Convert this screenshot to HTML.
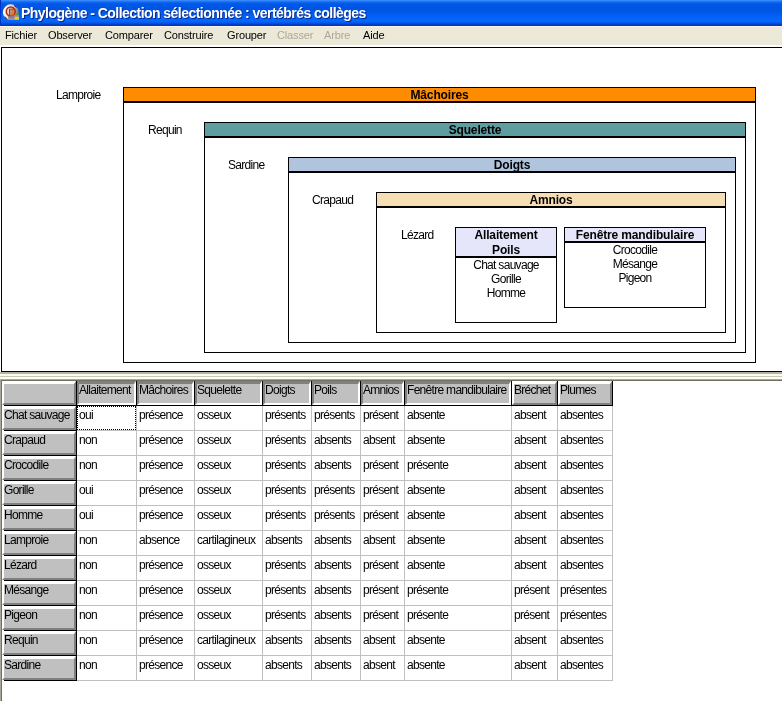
<!DOCTYPE html>
<html lang="fr"><head><meta charset="utf-8"><title>Phylogène</title>
<style>
html,body{margin:0;padding:0;}
body{width:782px;height:701px;overflow:hidden;background:#fff;position:relative;
 font-family:"Liberation Sans",Arial,sans-serif;font-size:12px;letter-spacing:-0.7px;color:#000;}
.a{position:absolute;}
.t{position:absolute;white-space:nowrap;line-height:13px;height:13px;z-index:5;}
#title{left:0;top:0;width:782px;height:26px;box-sizing:border-box;border-left:1px solid #0034c4;
 background:linear-gradient(to bottom,#3f93ff 0px,#1468f0 2px,#0058e6 4px,#0054e3 10px,#0260f4 16px,#0468ff 21px,#0456e8 23px,#0038b8 25px,#0038b8 26px);}
#title .txt{position:absolute;left:20px;top:5px;color:#fff;font-weight:bold;font-size:14px;letter-spacing:-0.54px;line-height:17px;white-space:nowrap;
 text-shadow:1px 1px 0 #0a2a8a;}
#menu{left:0;top:26px;width:782px;height:19px;background:#ece9d8;border-top:1px solid #fbf3ee;box-sizing:border-box;}
#menu span{position:absolute;top:2px;line-height:13px;white-space:nowrap;font-size:11px;letter-spacing:-0.15px;}
#menu span.d{color:#aca899;}
#up{left:1px;top:47px;width:790px;height:323px;border:1px solid #000;background:#fff;}
.box{position:absolute;border:1px solid #000;background:#fff;box-sizing:border-box;}
.band{position:absolute;left:0;right:0;top:0;border-bottom:2px solid #000;text-align:center;font-weight:bold;letter-spacing:-0.15px;line-height:13px;white-space:nowrap;}
.lst{position:absolute;left:0;right:0;text-align:center;line-height:14px;white-space:nowrap;}
.fh{position:absolute;background:#c0c0c0;box-sizing:border-box;border-style:solid;border-width:3px 2px 2px 2px;height:24px;}
.rh{border-color:#fff #808080 #808080 #fff;}
.ch{border-color:#808080 #fff #fff #808080;}
.vl{position:absolute;width:1px;}
.hl{position:absolute;height:1px;}
#root{position:absolute;left:0;top:0;width:782px;height:701px;overflow:hidden;will-change:transform;}
</style></head><body><div id="root">

<div id="title" class="a">
<svg class="a" style="left:1.5px;top:3.5px" width="16.5" height="16.5" viewBox="0 0 16 16"><defs><linearGradient id="ig" x1="0" y1="0.2" x2="1" y2="0.5"><stop offset="0" stop-color="#ffffff"/><stop offset="0.4" stop-color="#ece8e4"/><stop offset="0.75" stop-color="#b0a8a0"/><stop offset="1" stop-color="#787068"/></linearGradient></defs><circle cx="7.6" cy="8" r="7.7" fill="url(#ig)"/><path d="M10.8 1.2 L13.2 3.4 M1.6 12.2 L4 14.4" stroke="#282420" stroke-width="0.9" fill="none"/><rect x="5" y="10.5" width="10.4" height="5" fill="#a09088"/><circle cx="7.5" cy="7.3" r="4.3" fill="#e4d4c4" stroke="#b02c14" stroke-width="1.5"/><rect x="5.9" y="4.6" width="1.3" height="6" fill="#a02810"/><rect x="8.2" y="5.4" width="1.2" height="4.8" fill="#c85010"/><rect x="10.2" y="5" width="1.5" height="5.6" fill="#b03c20"/><rect x="7.2" y="4.4" width="4" height="1.1" fill="#a83018"/><rect x="7.4" y="9.6" width="3" height="1.6" fill="#e07010"/><rect x="11.6" y="9.2" width="3.2" height="1.8" fill="#48a840"/><rect x="6" y="11.8" width="5" height="1.6" fill="#8878b0"/><rect x="11.4" y="12.4" width="4" height="2.8" fill="#e4d020"/></svg>
<div class="txt">Phylogène - Collection sélectionnée : vertébrés collèges</div></div>
<div id="menu" class="a">
<span style="left:5px">Fichier</span>
<span style="left:48px">Observer</span>
<span style="left:105px">Comparer</span>
<span style="left:164px">Construire</span>
<span style="left:227px">Grouper</span>
<span style="left:277px" class="d">Classer</span>
<span style="left:324px" class="d">Arbre</span>
<span style="left:363px">Aide</span>
</div>
<div id="up" class="a"></div>
<div class="t" style="left:56px;top:89px">Lamproie</div>
<div class="t" style="left:148px;top:124px">Requin</div>
<div class="t" style="left:228px;top:159px">Sardine</div>
<div class="t" style="left:312px;top:194px">Crapaud</div>
<div class="t" style="left:401px;top:229px">Lézard</div>
<div class="box" style="left:123px;top:87px;width:633px;height:276px">
<div class="band" style="background:#ff8c00;height:13px;line-height:13px"><div style="margin-top:1px">Mâchoires</div></div>
</div>
<div class="box" style="left:204px;top:122px;width:542px;height:231px">
<div class="band" style="background:#5f9ea0;height:13px;line-height:13px"><div style="margin-top:1px">Squelette</div></div>
</div>
<div class="box" style="left:288px;top:157px;width:448px;height:186px">
<div class="band" style="background:#b0c4de;height:13px;line-height:13px"><div style="margin-top:1px">Doigts</div></div>
</div>
<div class="box" style="left:376px;top:192px;width:350px;height:141px">
<div class="band" style="background:#f5deb3;height:13px;line-height:13px"><div style="margin-top:1px">Amnios</div></div>
</div>
<div class="box" style="left:455px;top:227px;width:102px;height:96px">
<div class="band" style="background:#e6e6fa;height:28px;line-height:15px"><div style="margin-top:0px">Allaitement<br>Poils</div></div>
<div class="lst" style="top:30px">Chat sauvage<br>Gorille<br>Homme</div>
</div>
<div class="box" style="left:564px;top:227px;width:142px;height:81px">
<div class="band" style="background:#e6e6fa;height:13px;line-height:13px"><div style="margin-top:1px">Fenêtre mandibulaire</div></div>
<div class="lst" style="top:15px">Crocodile<br>Mésange<br>Pigeon</div>
</div>
<div class="a" style="left:0;top:372px;width:782px;height:9px;background:linear-gradient(to bottom,#b4b4a0 0,#b4b4a0 2px,#fbfbf6 2px,#fbfbf6 4px,#c8c8b4 4px,#c8c8b4 5px,#fffff0 5px,#fffff0 7px,#aca899 7px,#aca899 8px,#716f64 8px,#716f64 9px)"></div>
<div class="a" style="left:0;top:379px;width:1px;height:322px;background:#aca899"></div>
<div class="a" style="left:1px;top:380px;width:1px;height:321px;background:#716f64"></div>
<div class="fh rh" style="left:2px;top:381px;width:74px"></div>
<div class="fh ch" style="left:77px;top:381px;width:59px"></div>
<div class="t" style="left:79px;top:384px">Allaitement</div>
<div class="fh ch" style="left:137px;top:381px;width:57px"></div>
<div class="t" style="left:139px;top:384px">Mâchoires</div>
<div class="fh ch" style="left:195px;top:381px;width:67px"></div>
<div class="t" style="left:197px;top:384px">Squelette</div>
<div class="fh ch" style="left:263px;top:381px;width:48px"></div>
<div class="t" style="left:265px;top:384px">Doigts</div>
<div class="fh ch" style="left:312px;top:381px;width:48px"></div>
<div class="t" style="left:314px;top:384px">Poils</div>
<div class="fh ch" style="left:361px;top:381px;width:43px"></div>
<div class="t" style="left:363px;top:384px">Amnios</div>
<div class="fh ch" style="left:405px;top:381px;width:106px"></div>
<div class="t" style="left:407px;top:384px">Fenêtre mandibulaire</div>
<div class="fh rh" style="left:512px;top:381px;width:45px"></div>
<div class="t" style="left:514px;top:384px">Bréchet</div>
<div class="fh rh" style="left:558px;top:381px;width:54px"></div>
<div class="t" style="left:560px;top:384px">Plumes</div>
<div class="fh rh" style="left:2px;top:406px;width:74px"></div>
<div class="t" style="left:4px;top:409px">Chat sauvage</div>
<div class="t" style="left:79px;top:409px">oui</div>
<div class="t" style="left:139px;top:409px">présence</div>
<div class="t" style="left:197px;top:409px">osseux</div>
<div class="t" style="left:265px;top:409px">présents</div>
<div class="t" style="left:314px;top:409px">présents</div>
<div class="t" style="left:363px;top:409px">présent</div>
<div class="t" style="left:407px;top:409px">absente</div>
<div class="t" style="left:514px;top:409px">absent</div>
<div class="t" style="left:560px;top:409px">absentes</div>
<div class="fh rh" style="left:2px;top:431px;width:74px"></div>
<div class="t" style="left:4px;top:434px">Crapaud</div>
<div class="t" style="left:79px;top:434px">non</div>
<div class="t" style="left:139px;top:434px">présence</div>
<div class="t" style="left:197px;top:434px">osseux</div>
<div class="t" style="left:265px;top:434px">présents</div>
<div class="t" style="left:314px;top:434px">absents</div>
<div class="t" style="left:363px;top:434px">absent</div>
<div class="t" style="left:407px;top:434px">absente</div>
<div class="t" style="left:514px;top:434px">absent</div>
<div class="t" style="left:560px;top:434px">absentes</div>
<div class="fh rh" style="left:2px;top:456px;width:74px"></div>
<div class="t" style="left:4px;top:459px">Crocodile</div>
<div class="t" style="left:79px;top:459px">non</div>
<div class="t" style="left:139px;top:459px">présence</div>
<div class="t" style="left:197px;top:459px">osseux</div>
<div class="t" style="left:265px;top:459px">présents</div>
<div class="t" style="left:314px;top:459px">absents</div>
<div class="t" style="left:363px;top:459px">présent</div>
<div class="t" style="left:407px;top:459px">présente</div>
<div class="t" style="left:514px;top:459px">absent</div>
<div class="t" style="left:560px;top:459px">absentes</div>
<div class="fh rh" style="left:2px;top:481px;width:74px"></div>
<div class="t" style="left:4px;top:484px">Gorille</div>
<div class="t" style="left:79px;top:484px">oui</div>
<div class="t" style="left:139px;top:484px">présence</div>
<div class="t" style="left:197px;top:484px">osseux</div>
<div class="t" style="left:265px;top:484px">présents</div>
<div class="t" style="left:314px;top:484px">présents</div>
<div class="t" style="left:363px;top:484px">présent</div>
<div class="t" style="left:407px;top:484px">absente</div>
<div class="t" style="left:514px;top:484px">absent</div>
<div class="t" style="left:560px;top:484px">absentes</div>
<div class="fh rh" style="left:2px;top:506px;width:74px"></div>
<div class="t" style="left:4px;top:509px">Homme</div>
<div class="t" style="left:79px;top:509px">oui</div>
<div class="t" style="left:139px;top:509px">présence</div>
<div class="t" style="left:197px;top:509px">osseux</div>
<div class="t" style="left:265px;top:509px">présents</div>
<div class="t" style="left:314px;top:509px">présents</div>
<div class="t" style="left:363px;top:509px">présent</div>
<div class="t" style="left:407px;top:509px">absente</div>
<div class="t" style="left:514px;top:509px">absent</div>
<div class="t" style="left:560px;top:509px">absentes</div>
<div class="fh rh" style="left:2px;top:531px;width:74px"></div>
<div class="t" style="left:4px;top:534px">Lamproie</div>
<div class="t" style="left:79px;top:534px">non</div>
<div class="t" style="left:139px;top:534px">absence</div>
<div class="t" style="left:197px;top:534px">cartilagineux</div>
<div class="t" style="left:265px;top:534px">absents</div>
<div class="t" style="left:314px;top:534px">absents</div>
<div class="t" style="left:363px;top:534px">absent</div>
<div class="t" style="left:407px;top:534px">absente</div>
<div class="t" style="left:514px;top:534px">absent</div>
<div class="t" style="left:560px;top:534px">absentes</div>
<div class="fh rh" style="left:2px;top:556px;width:74px"></div>
<div class="t" style="left:4px;top:559px">Lézard</div>
<div class="t" style="left:79px;top:559px">non</div>
<div class="t" style="left:139px;top:559px">présence</div>
<div class="t" style="left:197px;top:559px">osseux</div>
<div class="t" style="left:265px;top:559px">présents</div>
<div class="t" style="left:314px;top:559px">absents</div>
<div class="t" style="left:363px;top:559px">présent</div>
<div class="t" style="left:407px;top:559px">absente</div>
<div class="t" style="left:514px;top:559px">absent</div>
<div class="t" style="left:560px;top:559px">absentes</div>
<div class="fh rh" style="left:2px;top:581px;width:74px"></div>
<div class="t" style="left:4px;top:584px">Mésange</div>
<div class="t" style="left:79px;top:584px">non</div>
<div class="t" style="left:139px;top:584px">présence</div>
<div class="t" style="left:197px;top:584px">osseux</div>
<div class="t" style="left:265px;top:584px">présents</div>
<div class="t" style="left:314px;top:584px">absents</div>
<div class="t" style="left:363px;top:584px">présent</div>
<div class="t" style="left:407px;top:584px">présente</div>
<div class="t" style="left:514px;top:584px">présent</div>
<div class="t" style="left:560px;top:584px">présentes</div>
<div class="fh rh" style="left:2px;top:606px;width:74px"></div>
<div class="t" style="left:4px;top:609px">Pigeon</div>
<div class="t" style="left:79px;top:609px">non</div>
<div class="t" style="left:139px;top:609px">présence</div>
<div class="t" style="left:197px;top:609px">osseux</div>
<div class="t" style="left:265px;top:609px">présents</div>
<div class="t" style="left:314px;top:609px">absents</div>
<div class="t" style="left:363px;top:609px">présent</div>
<div class="t" style="left:407px;top:609px">présente</div>
<div class="t" style="left:514px;top:609px">présent</div>
<div class="t" style="left:560px;top:609px">présentes</div>
<div class="fh rh" style="left:2px;top:631px;width:74px"></div>
<div class="t" style="left:4px;top:634px">Requin</div>
<div class="t" style="left:79px;top:634px">non</div>
<div class="t" style="left:139px;top:634px">présence</div>
<div class="t" style="left:197px;top:634px">cartilagineux</div>
<div class="t" style="left:265px;top:634px">absents</div>
<div class="t" style="left:314px;top:634px">absents</div>
<div class="t" style="left:363px;top:634px">absent</div>
<div class="t" style="left:407px;top:634px">absente</div>
<div class="t" style="left:514px;top:634px">absent</div>
<div class="t" style="left:560px;top:634px">absentes</div>
<div class="fh rh" style="left:2px;top:656px;width:74px"></div>
<div class="t" style="left:4px;top:659px">Sardine</div>
<div class="t" style="left:79px;top:659px">non</div>
<div class="t" style="left:139px;top:659px">présence</div>
<div class="t" style="left:197px;top:659px">osseux</div>
<div class="t" style="left:265px;top:659px">absents</div>
<div class="t" style="left:314px;top:659px">absents</div>
<div class="t" style="left:363px;top:659px">absent</div>
<div class="t" style="left:407px;top:659px">absente</div>
<div class="t" style="left:514px;top:659px">absent</div>
<div class="t" style="left:560px;top:659px">absentes</div>
<div class="vl" style="left:136px;top:406px;height:275px;background:#c0c0c0"></div>
<div class="vl" style="left:194px;top:406px;height:275px;background:#c0c0c0"></div>
<div class="vl" style="left:262px;top:406px;height:275px;background:#c0c0c0"></div>
<div class="vl" style="left:311px;top:406px;height:275px;background:#c0c0c0"></div>
<div class="vl" style="left:360px;top:406px;height:275px;background:#c0c0c0"></div>
<div class="vl" style="left:404px;top:406px;height:275px;background:#c0c0c0"></div>
<div class="vl" style="left:511px;top:406px;height:275px;background:#c0c0c0"></div>
<div class="vl" style="left:557px;top:406px;height:275px;background:#c0c0c0"></div>
<div class="vl" style="left:612px;top:406px;height:275px;background:#c0c0c0"></div>
<div class="hl" style="left:77px;top:430px;width:536px;background:#c0c0c0"></div>
<div class="hl" style="left:77px;top:455px;width:536px;background:#c0c0c0"></div>
<div class="hl" style="left:77px;top:480px;width:536px;background:#c0c0c0"></div>
<div class="hl" style="left:77px;top:505px;width:536px;background:#c0c0c0"></div>
<div class="hl" style="left:77px;top:530px;width:536px;background:#c0c0c0"></div>
<div class="hl" style="left:77px;top:555px;width:536px;background:#c0c0c0"></div>
<div class="hl" style="left:77px;top:580px;width:536px;background:#c0c0c0"></div>
<div class="hl" style="left:77px;top:605px;width:536px;background:#c0c0c0"></div>
<div class="hl" style="left:77px;top:630px;width:536px;background:#c0c0c0"></div>
<div class="hl" style="left:77px;top:655px;width:536px;background:#c0c0c0"></div>
<div class="hl" style="left:77px;top:680px;width:536px;background:#c0c0c0"></div>
<div class="hl" style="left:4px;top:405px;width:609px;background:#000"></div>
<div class="vl" style="left:76px;top:381px;height:25px;background:#000"></div>
<div class="vl" style="left:136px;top:381px;height:25px;background:#000"></div>
<div class="vl" style="left:194px;top:381px;height:25px;background:#000"></div>
<div class="vl" style="left:262px;top:381px;height:25px;background:#000"></div>
<div class="vl" style="left:311px;top:381px;height:25px;background:#000"></div>
<div class="vl" style="left:360px;top:381px;height:25px;background:#000"></div>
<div class="vl" style="left:404px;top:381px;height:25px;background:#000"></div>
<div class="vl" style="left:511px;top:381px;height:25px;background:#000"></div>
<div class="vl" style="left:557px;top:381px;height:25px;background:#000"></div>
<div class="vl" style="left:612px;top:381px;height:25px;background:#000"></div>
<div class="vl" style="left:76px;top:381px;height:300px;background:#000"></div>
<div class="hl" style="left:4px;top:430px;width:73px;background:#000"></div>
<div class="hl" style="left:4px;top:455px;width:73px;background:#000"></div>
<div class="hl" style="left:4px;top:480px;width:73px;background:#000"></div>
<div class="hl" style="left:4px;top:505px;width:73px;background:#000"></div>
<div class="hl" style="left:4px;top:530px;width:73px;background:#000"></div>
<div class="hl" style="left:4px;top:555px;width:73px;background:#000"></div>
<div class="hl" style="left:4px;top:580px;width:73px;background:#000"></div>
<div class="hl" style="left:4px;top:605px;width:73px;background:#000"></div>
<div class="hl" style="left:4px;top:630px;width:73px;background:#000"></div>
<div class="hl" style="left:4px;top:655px;width:73px;background:#000"></div>
<div class="hl" style="left:4px;top:680px;width:73px;background:#000"></div>
<div class="a" style="left:77px;top:406px;width:57px;height:22px;border:1px dotted #000"></div>
</div></body></html>
